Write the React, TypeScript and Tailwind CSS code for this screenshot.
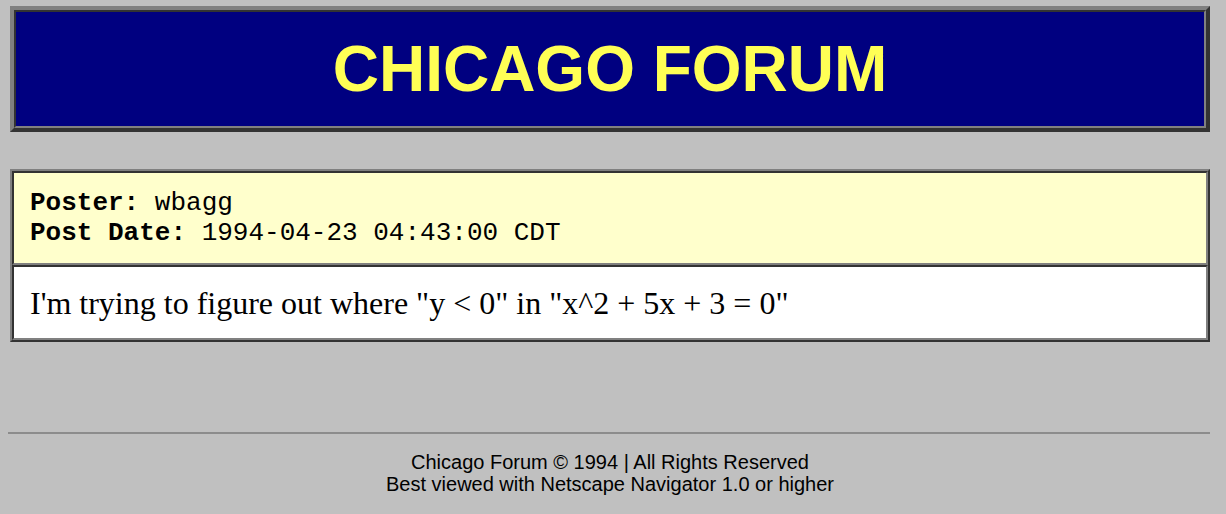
import React from "react";

const post = {
  poster: "wbagg",
  date: "1994-04-23 04:43:00 CDT",
  body: 'I\'m trying to figure out where "y < 0" in "x^2 + 5x + 3 = 0"',
};

export default function App() {
  return (
    <div className="min-h-[514px] bg-[#c0c0c0] pl-[10px] pr-[16px] pt-[6px]">
      {/* Masthead */}
      <div className="border-4 border-t-[#808080] border-l-[#808080] border-b-[#333333] border-r-[#333333]">
        <div className="border-2 border-t-[#333333] border-l-[#333333] border-b-[#808080] border-r-[#808080] bg-[#000080] h-[118px] flex items-center justify-center">
          <h1 className="text-[64px] font-bold text-[#ffff55] font-['Liberation_Sans',Arial,sans-serif] leading-none">
            CHICAGO FORUM
          </h1>
        </div>
      </div>

      {/* Post table */}
      <div className="mt-[37px] border-2 border-t-[#808080] border-l-[#808080] border-b-[#333333] border-r-[#333333]">
        <div className="border-2 border-t-[#333333] border-l-[#333333] border-b-[#808080] border-r-[#808080] bg-[#ffffcc] px-[16px] py-[15px] font-['Liberation_Mono','Courier_New',monospace] text-[26px] leading-[30px] text-black">
          <div>
            <b>Poster:</b> {post.poster}
          </div>
          <div>
            <b>Post Date:</b> {post.date}
          </div>
        </div>
        <div className="border-2 border-t-[#333333] border-l-[#333333] border-b-[#808080] border-r-[#808080] bg-white h-[75px] flex items-center px-[16px] font-['Liberation_Serif','Times_New_Roman',serif] text-[32px] text-black">
          {post.body}
        </div>
      </div>

      {/* Footer */}
      <div className="mt-[90px] -ml-[2px] h-[2px] bg-[#8c8c8c]" />
      <div className="pt-[17px] text-center font-['Liberation_Sans',Arial,sans-serif] text-[20px] leading-[22px] text-black">
        <div>Chicago Forum © 1994 | All Rights Reserved</div>
        <div>Best viewed with Netscape Navigator 1.0 or higher</div>
      </div>
    </div>
  );
}
